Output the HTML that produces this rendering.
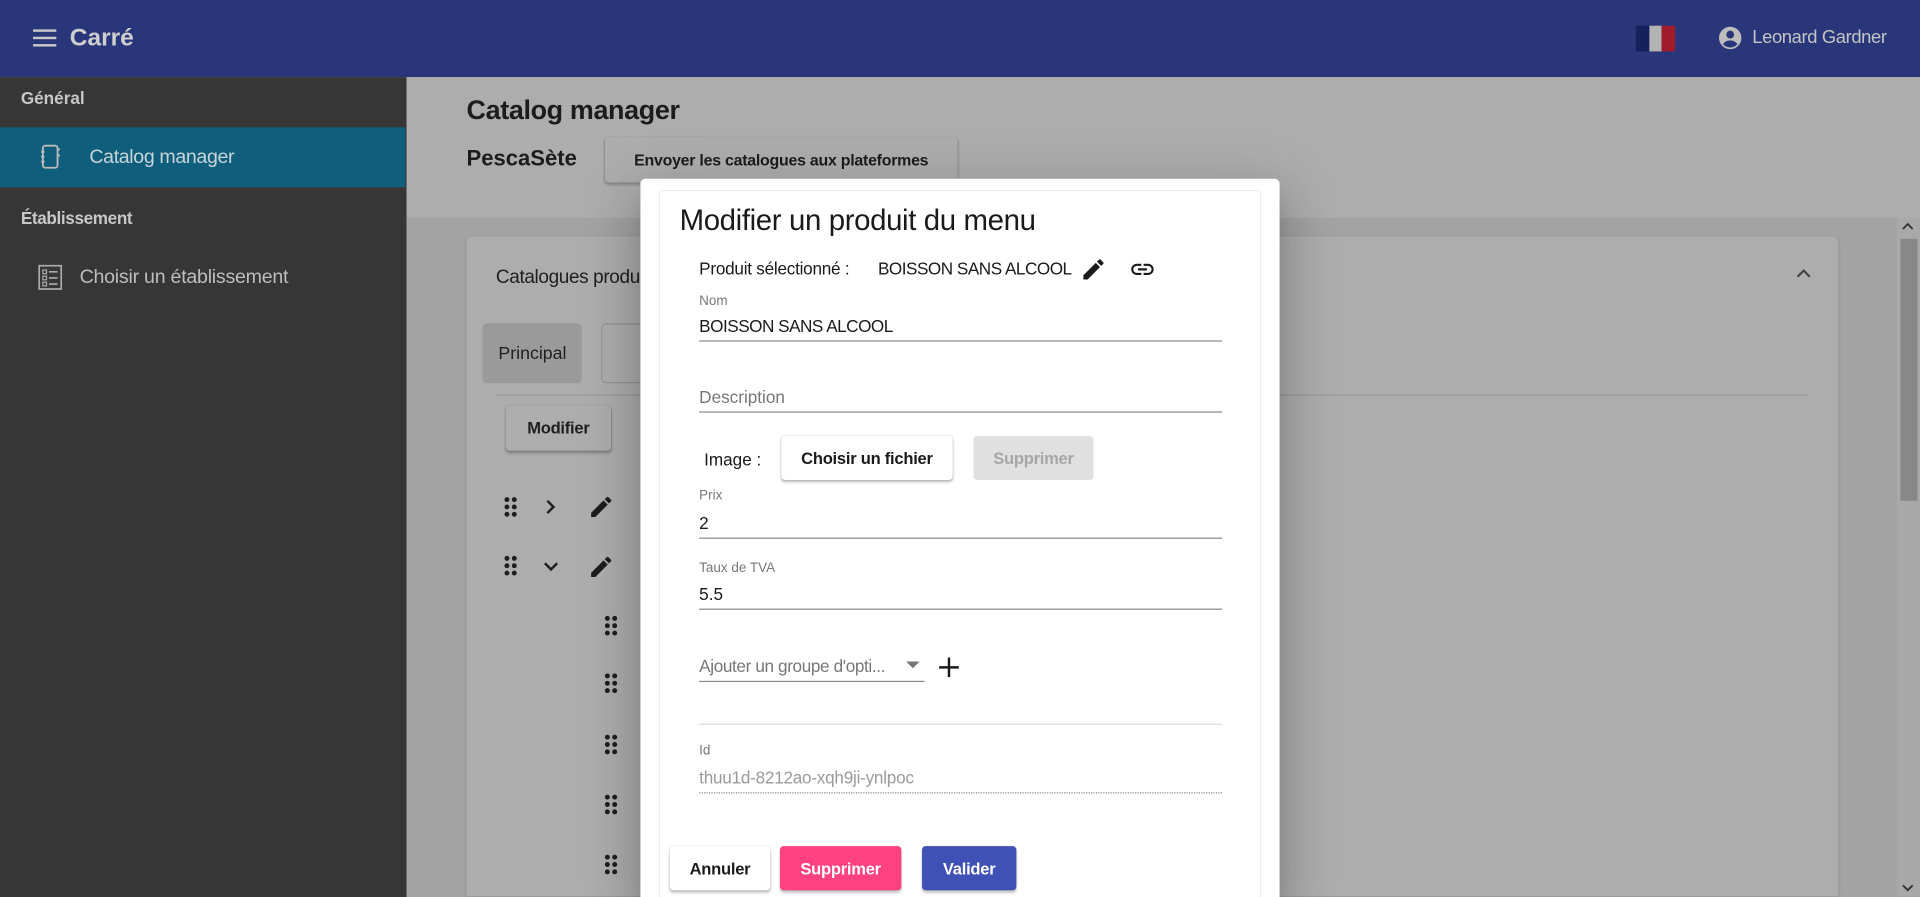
<!DOCTYPE html>
<html><head><meta charset="utf-8">
<style>
*{box-sizing:border-box;margin:0;padding:0}
html,body{width:1920px;height:897px;overflow:hidden;background:#a3a3a3}
#w{position:absolute;left:0;top:0;width:1568px;height:732.5px;overflow:hidden;transform:scale(1.22449);transform-origin:0 0;font-family:"Liberation Sans",sans-serif;color:#1a1a1a}
.a{position:absolute}
.t{position:absolute;white-space:nowrap;line-height:1}
.ln{position:absolute;height:1px;background:#8a8a8a}
.btn{position:absolute;border-radius:3px;display:flex;align-items:center;justify-content:center;font-size:13.5px;font-weight:bold;letter-spacing:-0.2px;box-shadow:0 2px 2px rgba(0,0,0,.22),0 0 1px rgba(0,0,0,.15)}
.dots{position:absolute;width:10px;height:16px}
.dots i{position:absolute;width:4px;height:4px;border-radius:50%;background:#1e1e1e}
</style></head><body><div id="w">
<div class="a" style="left:0;top:0;width:1568px;height:63px;background:#2a367a"></div>
<div class="a" style="left:27px;top:24px;width:19px;height:2px;background:#c8c8c8;box-shadow:0 6px 0 #c8c8c8,0 12px 0 #c8c8c8"></div>
<div class="t" style="left:57px;top:21px;font-size:20px;font-weight:bold;color:#cfcfcf">Carré</div>
<div class="a" style="left:1336px;top:21px;width:11px;height:21px;background:#14215c"></div>
<div class="a" style="left:1347px;top:21px;width:10px;height:21px;background:#b3b3b3"></div>
<div class="a" style="left:1357px;top:21px;width:11px;height:21px;background:#a11c2a"></div>
<svg class="a" style="left:1402px;top:20px" width="22" height="22" viewBox="0 0 24 24"><circle cx="12" cy="12" r="10" fill="#bdbdbd"/><circle cx="12" cy="9" r="3.5" fill="#2a367a"/><path d="M5.5 17.5c2-2.5 4-3.2 6.5-3.2s4.5.7 6.5 3.2A8.5 8.5 0 0 1 5.5 17.5z" fill="#2a367a"/></svg>
<div class="t" style="left:1431px;top:23px;font-size:15px;color:#c4c4c4;letter-spacing:-0.3px">Leonard Gardner</div>
<div class="a" style="left:0;top:63px;width:332px;height:670px;background:#363636"></div>
<div class="t" style="left:17px;top:73px;font-size:14px;font-weight:bold;color:#c8c8c8">Général</div>
<div class="a" style="left:0;top:104px;width:331px;height:49px;background:#0f5e7c"></div>
<svg class="a" style="left:32px;top:118px" width="18" height="20" viewBox="0 0 18 20"><rect x="3" y="1" width="12" height="18" rx="2" fill="none" stroke="#bbb" stroke-width="1.5"/><circle cx="3" cy="6" r="1.3" fill="#bbb"/><circle cx="3" cy="10" r="1.3" fill="#bbb"/><circle cx="3" cy="14" r="1.3" fill="#bbb"/><path d="M15 4h2M15 9h2" stroke="#bbb" stroke-width="1.5"/></svg>
<div class="t" style="left:73px;top:121px;font-size:16px;color:#c8d4d9;letter-spacing:-0.3px">Catalog manager</div>
<div class="t" style="left:17px;top:171px;font-size:14px;font-weight:bold;color:#c8c8c8;letter-spacing:-0.3px">Établissement</div>
<svg class="a" style="left:31px;top:216px" width="20" height="21" viewBox="0 0 20 21"><rect x="1" y="1" width="18" height="19" fill="none" stroke="#aaa" stroke-width="1.4"/><rect x="4" y="4.5" width="3" height="3" fill="none" stroke="#aaa"/><rect x="4" y="9.5" width="3" height="3" fill="none" stroke="#aaa"/><rect x="4" y="14.5" width="3" height="3" fill="none" stroke="#aaa"/><path d="M9 6h7M9 11h7M9 16h7" stroke="#aaa" stroke-width="1.3"/></svg>
<div class="t" style="left:65px;top:219px;font-size:16px;color:#bdbdbd;letter-spacing:-0.2px">Choisir un établissement</div>
<div class="a" style="left:332px;top:63px;width:1236px;height:115px;background:#adadad"></div>
<div class="a" style="left:332px;top:178px;width:1236px;height:554px;background:#a3a3a3"></div>
<div class="t" style="left:381px;top:79px;font-size:22px;font-weight:bold;color:#1c1c1c;letter-spacing:-0.3px">Catalog manager</div>
<div class="t" style="left:381px;top:120px;font-size:18px;font-weight:bold;color:#1c1c1c">PescaSète</div>
<div class="btn" style="left:494px;top:112px;width:288px;height:37px;background:#adadad;font-size:13px;color:#1c1c1c">Envoyer les catalogues aux plateformes</div>
<div class="a" style="left:381px;top:193px;width:1120px;height:539px;background:#adadad;border-radius:4px 4px 0 0;box-shadow:0 1px 3px rgba(0,0,0,.15)"></div>
<div class="t" style="left:405px;top:219px;font-size:15.5px;color:#1f1f1f;letter-spacing:-0.3px">Catalogues produits</div>
<svg class="a" style="left:1466px;top:218px" width="14" height="10" viewBox="0 0 14 10"><path d="M2 8l5-5 5 5" fill="none" stroke="#444" stroke-width="1.8"/></svg>
<div class="a" style="left:394px;top:264px;width:81px;height:49px;background:#9a9a9a;border-radius:4px"></div>
<div class="t" style="left:407px;top:282px;font-size:14.5px;color:#1f1f1f">Principal</div>
<div class="a" style="left:491px;top:264px;width:81px;height:49px;border:1px solid #959595;border-radius:4px"></div>
<div class="a" style="left:405px;top:322px;width:1072px;height:1px;background:#999"></div>
<div class="btn" style="left:413px;top:331px;width:86px;height:37px;background:#adadad;color:#1f1f1f">Modifier</div>
<div class="dots" style="left:412px;top:406px"><i style="left:0;top:0"></i><i style="left:6px;top:0"></i><i style="left:0;top:6px"></i><i style="left:6px;top:6px"></i><i style="left:0;top:12px"></i><i style="left:6px;top:12px"></i></div>
<svg class="a" style="left:444px;top:407px" width="12" height="14" viewBox="0 0 12 14"><path d="M3 2l5 5-5 5" fill="none" stroke="#1e1e1e" stroke-width="2"/></svg>
<svg class="a" style="left:480px;top:403px" width="22" height="22" viewBox="0 0 24 24"><path d="M3 17.25V21h3.75L17.81 9.94l-3.75-3.75L3 17.25zM20.71 7.04a1 1 0 000-1.41l-2.34-2.34a1 1 0 00-1.41 0l-1.83 1.83 3.75 3.75 1.83-1.83z" fill="#1e1e1e"/></svg>
<div class="dots" style="left:412px;top:454px"><i style="left:0;top:0"></i><i style="left:6px;top:0"></i><i style="left:0;top:6px"></i><i style="left:6px;top:6px"></i><i style="left:0;top:12px"></i><i style="left:6px;top:12px"></i></div>
<svg class="a" style="left:443px;top:457px" width="14" height="12" viewBox="0 0 14 12"><path d="M2 3l5 5 5-5" fill="none" stroke="#1e1e1e" stroke-width="2"/></svg>
<svg class="a" style="left:480px;top:452px" width="22" height="22" viewBox="0 0 24 24"><path d="M3 17.25V21h3.75L17.81 9.94l-3.75-3.75L3 17.25zM20.71 7.04a1 1 0 000-1.41l-2.34-2.34a1 1 0 00-1.41 0l-1.83 1.83 3.75 3.75 1.83-1.83z" fill="#1e1e1e"/></svg>
<div class="dots" style="left:494px;top:503px"><i style="left:0;top:0"></i><i style="left:6px;top:0"></i><i style="left:0;top:6px"></i><i style="left:6px;top:6px"></i><i style="left:0;top:12px"></i><i style="left:6px;top:12px"></i></div>
<div class="dots" style="left:494px;top:550px"><i style="left:0;top:0"></i><i style="left:6px;top:0"></i><i style="left:0;top:6px"></i><i style="left:6px;top:6px"></i><i style="left:0;top:12px"></i><i style="left:6px;top:12px"></i></div>
<div class="dots" style="left:494px;top:600px"><i style="left:0;top:0"></i><i style="left:6px;top:0"></i><i style="left:0;top:6px"></i><i style="left:6px;top:6px"></i><i style="left:0;top:12px"></i><i style="left:6px;top:12px"></i></div>
<div class="dots" style="left:494px;top:649px"><i style="left:0;top:0"></i><i style="left:6px;top:0"></i><i style="left:0;top:6px"></i><i style="left:6px;top:6px"></i><i style="left:0;top:12px"></i><i style="left:6px;top:12px"></i></div>
<div class="dots" style="left:494px;top:698px"><i style="left:0;top:0"></i><i style="left:6px;top:0"></i><i style="left:0;top:6px"></i><i style="left:6px;top:6px"></i><i style="left:0;top:12px"></i><i style="left:6px;top:12px"></i></div>
<div class="a" style="left:1549px;top:178px;width:19px;height:554px;background:#a9a9a9"></div>
<div class="a" style="left:1552px;top:195px;width:14px;height:214px;background:#888"></div>
<svg class="a" style="left:1553px;top:181px" width="10" height="8" viewBox="0 0 10 8"><path d="M1 6l4-4 4 4" fill="none" stroke="#333" stroke-width="1.5"/></svg>
<svg class="a" style="left:1553px;top:721px" width="10" height="8" viewBox="0 0 10 8"><path d="M1 2l4 4 4-4" fill="none" stroke="#333" stroke-width="1.5"/></svg>
<div class="a" style="left:523px;top:146px;width:522px;height:587px;background:#fff;border-radius:4px 4px 0 0;box-shadow:0 11px 15px -7px rgba(0,0,0,.2),0 24px 38px 3px rgba(0,0,0,.14),0 9px 46px 8px rgba(0,0,0,.12)"></div>
<div class="a" style="left:538px;top:155px;width:492px;height:578px;border:1px solid #ececec;border-bottom:none;border-radius:4px 4px 0 0"></div>
<div class="t" style="left:555px;top:169px;font-size:24px;color:#1a1a1a;letter-spacing:-0.3px">Modifier un produit du menu</div>
<div class="t" style="left:571px;top:212px;font-size:14px;letter-spacing:-0.2px">Produit sélectionné :</div>
<div class="t" style="left:717px;top:212px;font-size:14px;letter-spacing:-0.4px">BOISSON SANS ALCOOL</div>
<svg class="a" style="left:882px;top:209px" width="22" height="22" viewBox="0 0 24 24"><path d="M3 17.25V21h3.75L17.81 9.94l-3.75-3.75L3 17.25zM20.71 7.04a1 1 0 000-1.41l-2.34-2.34a1 1 0 00-1.41 0l-1.83 1.83 3.75 3.75 1.83-1.83z" fill="#1a1a1a"/></svg>
<svg class="a" style="left:922px;top:209px" width="22" height="22" viewBox="0 0 24 24"><path d="M3.9 12c0-1.71 1.39-3.1 3.1-3.1h4V7H7c-2.76 0-5 2.24-5 5s2.24 5 5 5h4v-1.9H7c-1.71 0-3.1-1.39-3.1-3.1zM8 13h8v-2H8v2zm9-6h-4v1.9h4c1.71 0 3.1 1.39 3.1 3.1s-1.39 3.1-3.1 3.1h-4V17h4c2.76 0 5-2.24 5-5s-2.24-5-5-5z" fill="#1a1a1a"/></svg>
<div class="t" style="left:571px;top:241px;font-size:11px;color:#777">Nom</div>
<div class="t" style="left:571px;top:259px;font-size:14px;letter-spacing:-0.4px">BOISSON SANS ALCOOL</div>
<div class="ln" style="left:571px;top:278px;width:427px"></div>
<div class="t" style="left:571px;top:317px;font-size:14px;color:#777">Description</div>
<div class="ln" style="left:571px;top:336px;width:427px"></div>
<div class="t" style="left:575px;top:368px;font-size:14px">Image :</div>
<div class="btn" style="left:638px;top:356px;width:140px;height:36px;background:#fff;color:#1a1a1a">Choisir un fichier</div>
<div class="a" style="left:795px;top:356px;width:98px;height:36px;background:#e0e0e0;border-radius:3px;display:flex;align-items:center;justify-content:center;font-size:13.5px;font-weight:bold;color:#a6a6a6;letter-spacing:-0.2px">Supprimer</div>
<div class="t" style="left:571px;top:400px;font-size:11px;color:#777">Prix</div>
<div class="t" style="left:571px;top:420px;font-size:14px">2</div>
<div class="ln" style="left:571px;top:439px;width:427px"></div>
<div class="t" style="left:571px;top:459px;font-size:11px;color:#777">Taux de TVA</div>
<div class="t" style="left:571px;top:478px;font-size:14px">5.5</div>
<div class="ln" style="left:571px;top:497px;width:427px"></div>
<div class="t" style="left:571px;top:537px;font-size:14px;color:#777;letter-spacing:-0.3px">Ajouter un groupe d'opti...</div>
<svg class="a" style="left:740px;top:540px" width="11" height="6" viewBox="0 0 10 5"><path d="M0 0l5 5 5-5z" fill="#757575"/></svg>
<div class="ln" style="left:571px;top:556px;width:184px"></div>
<svg class="a" style="left:766px;top:536px" width="18" height="18" viewBox="0 0 18 18"><path d="M9 1v16M1 9h16" stroke="#1a1a1a" stroke-width="2"/></svg>
<div class="a" style="left:571px;top:591px;width:427px;height:1px;background:#ddd"></div>
<div class="t" style="left:571px;top:608px;font-size:11px;color:#777">Id</div>
<div class="t" style="left:571px;top:628px;font-size:14px;color:#9a9a9a;letter-spacing:-0.2px">thuu1d-8212ao-xqh9ji-ynlpoc</div>
<div class="a" style="left:571px;top:647px;width:427px;height:0;border-top:1px dotted #888"></div>
<div class="btn" style="left:547px;top:691px;width:82px;height:36px;background:#fff;color:#1a1a1a">Annuler</div>
<div class="btn" style="left:637px;top:691px;width:99px;height:36px;background:#ff4081;color:#fff">Supprimer</div>
<div class="btn" style="left:753px;top:691px;width:77px;height:36px;background:#3f51b5;color:#fff">Valider</div>
</div></body></html>
